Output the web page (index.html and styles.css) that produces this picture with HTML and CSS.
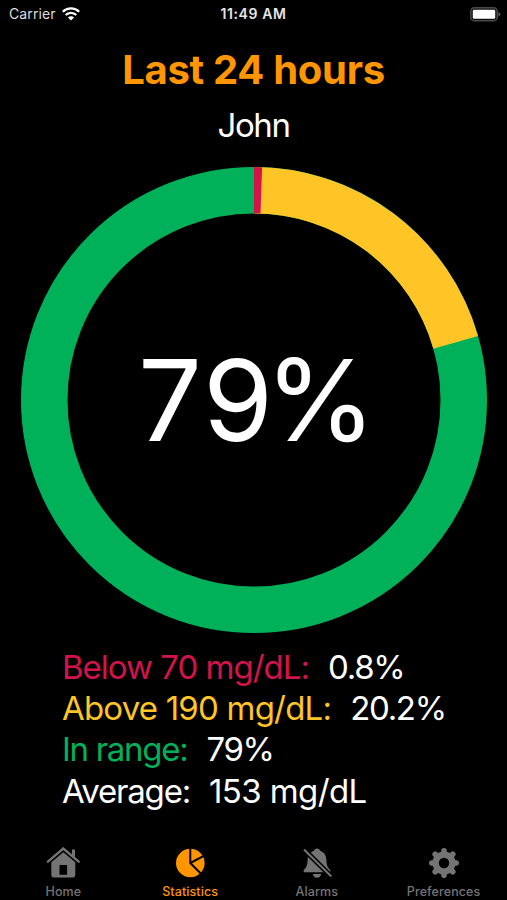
FILE: index.html
```
<!DOCTYPE html>
<html lang="en">

<head>
    <meta charset="UTF-8">
    <meta name="viewport" content="width=device-width, initial-scale=1.0">
    <title>Statistics</title>
    <link rel="stylesheet" href="styles.css">
</head>

<body>
    <div class="screen">
        <header class="status-bar">
            <div class="carrier">
                <span>Carrier</span>
                <svg class="wifi" width="18" height="14" viewBox="0 0 18 14">
                    <path d="M.8 4.8a11.6 11.6 0 0 1 16.4 0M3.7 8a7.5 7.5 0 0 1 10.6 0" fill="none" stroke="#fff" stroke-width="2.3"/>
                    <path d="M9 13.6L5.9 10.6a4.4 4.4 0 0 1 6.2 0z" fill="#fff"/>
                </svg>
            </div>
            <span class="time">11:49 AM</span>
            <svg class="battery" width="31" height="15" viewBox="0 0 31 15">
                <rect x=".8" y=".8" width="26.4" height="13" rx="3.6" fill="#111" stroke="#48484a" stroke-width="1.5"/>
                <rect x="2.8" y="2.8" width="22.4" height="9" rx="1.4" fill="#fff"/>
                <path d="M28.4 4.9q2 1 2 2.4t-2 2.4z" fill="#555"/>
            </svg>
        </header>

        <main class="content">
            <h1 class="title">Last 24 hours</h1>
            <p class="name">John</p>

            <div class="chart">
                <svg class="ring" viewBox="0 0 466 466">
                    <g fill="none" stroke-width="46.5" transform="rotate(-90 233 233)">
                        <circle cx="233" cy="233" r="209.75" stroke="#00b15a"/>
                        <circle cx="233" cy="233" r="209.75" stroke="#ffc426" pathLength="100" stroke-dasharray="20.57 100"/>
                        <circle cx="233" cy="233" r="209.75" stroke="#d3134a" pathLength="100" stroke-dasharray="0.56 100"/>
                    </g>
                </svg>
                <span class="percent"><span class="seven">7</span><span class="nine">9</span>%</span>
            </div>

            <ul class="stats">
                <li><span class="label below">Below 70 mg/dL:</span><span class="value">0.8%</span></li>
                <li><span class="label above">Above 190 mg/dL:</span><span class="value">20.2%</span></li>
                <li><span class="label range">In range:</span><span class="value">79%</span></li>
                <li><span class="label">Average:</span><span class="average">153 mg/dL</span></li>
            </ul>
        </main>

        <nav class="tabs">
            <a class="tab">
                <svg width="34" height="32" viewBox="0 0 34 32">
                    <path d="M1.9 14.6L17.3 1.5l15.4 13.1" fill="none" stroke="currentColor" stroke-width="2.4" stroke-linecap="round"/>
                    <path d="M26 2.5h3v8.3l-3-2.6z" fill="currentColor"/>
                    <path d="M17.3 5.2l-12 10v12.6q0 2.6 2.6 2.6h18.8q2.6 0 2.6-2.6V15.2zM13.5 18h7.6v9.8h-7.6z" fill="currentColor" fill-rule="evenodd"/>
                </svg>
                <span>Home</span>
            </a>
            <a class="tab active">
                <svg width="34" height="32" viewBox="0 0 34 32">
                    <circle cx="17.3" cy="16" r="14.3" fill="currentColor"/>
                    <path d="M17.3 1v15l10.5 10.5M17.3 16l13.5-7.2" fill="none" stroke="#000" stroke-width="2"/>
                </svg>
                <span>Statistics</span>
            </a>
            <a class="tab">
                <svg width="34" height="32" viewBox="0 0 34 32">
                    <path d="M17 1.5c1.7 0 2.8 1 3 2.2 4.1 1.4 6.2 4.6 6.4 9 .2 5 .9 7.6 3.9 10.4v2.2H3.7v-2.2c3-2.8 3.7-5.4 3.9-10.4.2-4.4 2.3-7.6 6.4-9 .2-1.2 1.3-2.2 3-2.2zM12.8 27h8.4c-.3 2.1-1.9 3.7-4.2 3.7s-3.9-1.6-4.2-3.7z" fill="currentColor"/>
                    <path d="M4 2.5l27.3 27" stroke="#000" stroke-width="5.2"/>
                    <path d="M4 2.5l27.3 27" stroke="currentColor" stroke-width="2"/>
                </svg>
                <span>Alarms</span>
            </a>
            <a class="tab">
                <svg width="34" height="32" viewBox="0 0 34 32">
                    <g fill="none" stroke="currentColor">
                        <circle cx="17" cy="16" r="8.4" stroke-width="6.4"/>
                        <path d="M17 3.8v2M17 26.2v2M4.8 16h2M27.2 16h2M8.2 7.2l2 2M23.8 22.8l2 2M25.8 7.2l-2 2M10.2 22.8l-2 2" stroke-width="5.6" stroke-linecap="round"/>
                    </g>
                </svg>
                <span>Preferences</span>
            </a>
        </nav>
    </div>
</body>

</html>
```
FILE: styles.css
```
* {
    margin: 0;
    padding: 0;
    box-sizing: border-box;
}

body {
    background: #000;
    color: #fff;
    font-family: Inter, "Liberation Sans", sans-serif;
}

.screen {
    width: 507px;
    height: 900px;
    display: flex;
    flex-direction: column;
    overflow: hidden;
}

/* status bar */
.status-bar {
    height: 28px;
    padding: 0 6px 0 9px;
    display: grid;
    grid-template-columns: 1fr auto 1fr;
    align-items: center;
    font-size: 14px;
    line-height: 28px;
}

.carrier {
    display: flex;
    align-items: center;
    gap: 6px;
    color: #ddd;
    letter-spacing: 0.1px;
}

.time {
    margin-right: 3px;
    font-size: 14px;
    font-weight: 600;
    letter-spacing: 0.6px;
    color: #e6e6e6;
}

.battery {
    justify-self: end;
}

/* content */
.content {
    flex: 1;
    display: flex;
    flex-direction: column;
    align-items: center;
}

.title {
    margin-top: 18px;
    font-size: 40px;
    line-height: 48px;
    font-weight: 700;
    letter-spacing: -0.3px;
    color: #ff9500;
}

.name {
    margin-top: 11px;
    font-size: 33px;
    line-height: 40px;
    font-weight: 400;
    letter-spacing: -1.4px;
}

.chart {
    width: 466px;
    height: 466px;
    margin-top: 22px;
    margin-left: 1px;
    display: grid;
    place-items: center;
}

.ring,
.percent {
    grid-area: 1 / 1;
}

.ring {
    width: 466px;
    height: 466px;
}

.percent {
    padding-left: 6px;
    font-size: 113px;
    line-height: 136px;
}

.seven {
    letter-spacing: 1px;
}

.nine {
    letter-spacing: -8px;
}

.stats {
    align-self: flex-start;
    margin-top: 14px;
    padding-left: 62px;
    list-style: none;
    font-size: 33px;
    line-height: 41.2px;
    white-space: nowrap;
}

.stats li {
    display: flex;
    gap: 19px;
}

.label {
    letter-spacing: -1.2px;
}

.value {
    letter-spacing: -1.3px;
}

.average {
    letter-spacing: -0.6px;
}

.below {
    letter-spacing: -1px;
    color: #d3134a;
}

.above {
    letter-spacing: -0.8px;
    color: #ffc426;
}

.range {
    letter-spacing: -1.3px;
    color: #00b15a;
}

/* tab bar */
.tabs {
    height: 55px;
    display: grid;
    grid-template-columns: repeat(4, 1fr);
}

.tab {
    display: flex;
    flex-direction: column;
    align-items: center;
    gap: 5px;
    padding-top: 2px;
    font-size: 12.5px;
    line-height: 16px;
    font-weight: 500;
    letter-spacing: 0.1px;
    color: #747474;
}

.active {
    color: #ff9500;
}
```
